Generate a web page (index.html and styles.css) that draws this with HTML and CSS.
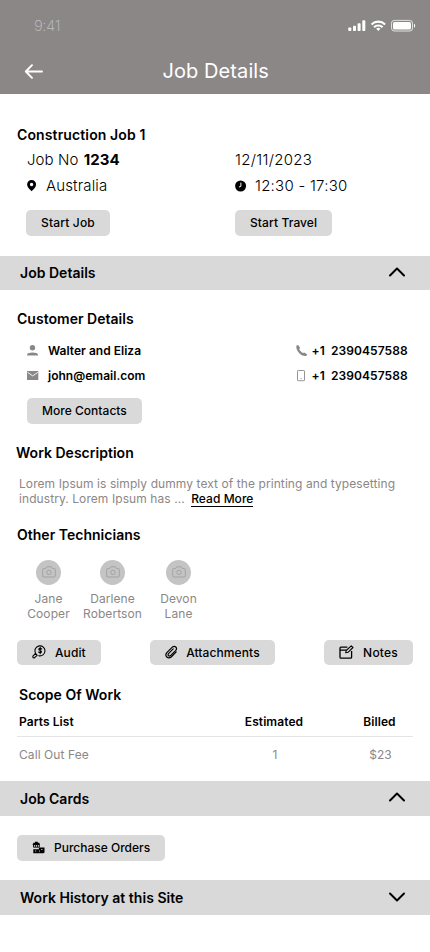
FILE: index.html
```html
<!DOCTYPE html>
<html lang="en">
<head>
<meta charset="utf-8">
<title>Job Details</title>
<link rel="stylesheet" href="styles.css">
</head>
<body>
<header class="top">
  <div class="status">
    <span class="clock">9:41</span>
    <svg class="signals" width="68" height="14" viewBox="0 0 68 14" fill="#fff">
      <rect x="0.3" y="8.5" width="3" height="3.6" rx=".8"/><rect x="5" y="6.7" width="3" height="5.4" rx=".8"/><rect x="9.6" y="4.2" width="3" height="7.9" rx=".8"/><rect x="14.3" y="1.2" width="3" height="10.9" rx=".8"/>
      <g fill="none" stroke="#fff" stroke-width="2.1"><path d="M23.5 5.4a9.8 9.8 0 0 1 13.6 0"/><path d="M26 8.2a6.2 6.2 0 0 1 8.6 0"/></g>
      <path d="M28.2 9.7a3.2 3.2 0 0 1 4.2 0l-2.1 2.3z"/>
      <rect x="43.5" y="1.4" width="21" height="10.6" rx="2.8" fill="none" stroke="#fff" stroke-opacity=".75"/><rect x="45" y="2.9" width="18" height="7.6" rx="1.5"/><path d="M66 4.8v4c1.6-.7 1.6-3.3 0-4z"/>
    </svg>
  </div>
  <div class="nav">
    <svg class="back" width="20" height="16" viewBox="0 0 20 16" fill="none" stroke="#fff" stroke-width="1.9" stroke-linecap="round" stroke-linejoin="round"><path d="M18 8.500H1.800M8 2.200 1.800 8.500 8 14.800"/></svg>
    <h1>Job Details</h1>
  </div>
</header>
<main>
  <section class="summary">
    <h2 class="jobname">Construction Job 1</h2>
    <div class="pair jobno"><span>Job No <b>1234</b></span><span class="date">12/11/2023</span></div>
    <div class="pair place">
      <span class="fact"><svg width="10" height="12" viewBox="0 0 10 12"><path fill-rule="evenodd" d="M4.600 0a4.500 4.500 0 0 1 4.500 4.500C9.100 7.400 6.400 9.400 4.600 11.200 2.800 9.400.1 7.400.1 4.500A4.500 4.500 0 0 1 4.600 0zM4.600 2.800a1.700 1.700 0 1 0 0 3.400 1.700 1.700 0 0 0 0-3.400z"/></svg>Australia</span>
      <span class="fact time"><svg width="12" height="12" viewBox="0 0 12 12"><circle cx="5.600" cy="6" r="5.500"/><path d="M5.900 2.600V6.300L4 7" fill="none" stroke="#fff"/></svg>12:30 - 17:30</span>
    </div>
    <div class="pair actions"><span><button>Start Job</button></span><span><button>Start Travel</button></span></div>
  </section>
  <div class="bar"><h2>Job Details</h2><svg class="chev" width="18" height="12" viewBox="0 0 18 12"><path d="m2 9.500 7-7 7 7"/></svg></div>
  <section class="details">
    <h2>Customer Details</h2>
    <div class="contact first">
      <svg width="12" height="12" viewBox="0 0 12 12" fill="#8b8787"><circle cx="5.500" cy="2.700" r="2.700"/><path d="M0 10.600V9.400C0 6.700 11 6.700 11 9.400v1.200z"/></svg><b>Walter and Eliza</b>
      <svg class="phone" width="12" height="12" viewBox="0 0 12 12" fill="#8b8787"><path d="M.400.800Q.9 0 2.200 0L4 2.700Q4 3.600 3.200 4.200C3.900 5.700 5.300 7 6.900 7.900L8.200 7.400 11.100 9.200Q11.100 10.400 10 11C5.200 11.900-.5 5.700.400.800z"/></svg><b class="num">+1&nbsp; 2390457588</b>
    </div>
    <div class="contact">
      <svg width="12" height="10" viewBox="0 0 12 10"><path d="M0 0h11.300v9H0z" fill="#8b8787"/><path d="m.5 1.300 5.200 3.600 5.200-3.600" fill="none" stroke="#fff" stroke-width=".9"/></svg><b>john@email.com</b>
      <svg class="phone" width="12" height="12" viewBox="0 0 12 12"><rect x="1.500" y=".5" width="7" height="10.200" rx=".7" fill="none" stroke="#8b8787" stroke-width=".9"/><path d="M4.500 8.500h1.200" stroke="#8b8787" stroke-width=".8"/></svg><b class="num">+1&nbsp; 2390457588</b>
    </div>
    <button class="more">More Contacts</button>
    <h2 class="work">Work Description</h2>
    <p class="desc">Lorem Ipsum is simply dummy text of the printing and typesetting<br>industry. Lorem Ipsum has ... <a>Read More</a></p>
    <h2 class="other">Other Technicians</h2>
    <div class="people">
      <div class="person"><span class="avatar"><svg width="14" height="12" viewBox="0 0 14 12"><path d="M.7 3.500Q.7 2.500 1.700 2.500H3.700L4.700.800H9.300L10.300 2.500H12.300Q13.300 2.500 13.300 3.500V10Q13.300 11 12.300 11H1.700Q.7 11 .7 10z"/><circle cx="7" cy="6.400" r="2.200"/></svg></span>Jane<br>Cooper</div>
      <div class="person"><span class="avatar"><svg width="14" height="12" viewBox="0 0 14 12"><path d="M.7 3.500Q.7 2.500 1.700 2.500H3.700L4.700.800H9.300L10.300 2.500H12.300Q13.300 2.500 13.300 3.500V10Q13.300 11 12.300 11H1.700Q.7 11 .7 10z"/><circle cx="7" cy="6.400" r="2.200"/></svg></span>Darlene<br>Robertson</div>
      <div class="person"><span class="avatar"><svg width="14" height="12" viewBox="0 0 14 12"><path d="M.7 3.500Q.7 2.500 1.700 2.500H3.700L4.700.800H9.300L10.300 2.500H12.300Q13.300 2.500 13.300 3.500V10Q13.300 11 12.300 11H1.700Q.7 11 .7 10z"/><circle cx="7" cy="6.400" r="2.200"/></svg></span>Devon<br>Lane</div>
    </div>
    <div class="tools">
      <button><svg width="14" height="14" viewBox="0 0 14 14" fill="none" stroke="#000" stroke-width="1.100" stroke-linecap="round"><path d="M3.300 7.600A5 5 0 1 1 6.800 10.700"/><path d="M3.500 8.300.900 11.100Q.5 12.600 2 13.100L5.200 10.300z" stroke-linejoin="round"/><path d="M9.700 4Q8 2.900 6.900 3.900C6.100 5.800 9.900 5 9.500 6.900 8.700 8.100 7.500 7.700 6.600 7M8.200 2.200V8.700"/></svg>Audit</button>
      <button class="attach"><svg width="14" height="14" viewBox="0 0 14 14" fill="none" stroke="#000" stroke-width="1.200" stroke-linecap="round" stroke-linejoin="round"><path d="M11.200 6.900 6.200 12C3 14.500-.8 10.900 1.800 7.700L7.300 2.100C9.800 0 12.800 3 10.800 5.300L5.500 10.600C4 11.700 2.300 10.100 3.500 8.600L8.200 3.900"/></svg>Attachments</button>
      <button class="notes"><svg width="15" height="14" viewBox="0 0 15 14" fill="none" stroke="#000" stroke-width="1.300" stroke-linejoin="round"><path d="M8.400 2.200H2Q1 2.200 1 3.200V12.200Q1 13.200 2 13.200H11.600Q12.600 13.200 12.600 12.200V6M1.200 5.200H7"/><path d="m6.700 7.800.5-2.300L12.200.900 14 2.500 9 7.300z" stroke-width="1.100"/></svg>Notes</button>
    </div>
    <h2 class="scope">Scope Of Work</h2>
    <div class="grid head"><span>Parts List</span><span>Estimated</span><span>Billed</span></div>
    <div class="grid"><span>Call Out Fee</span><span>1</span><span>$23</span></div>
  </section>
  <div class="bar"><h2>Job Cards</h2><svg class="chev" width="18" height="12" viewBox="0 0 18 12"><path d="m2 9.500 7-7 7 7"/></svg></div>
  <div class="orders"><button><svg width="13" height="13" viewBox="0 0 13 13"><path d="M1.500 1.800h1.500V.800h2.800v1h1.500L8 4H.5z"/><path d="M1.500 4v2.200h5.800V4M3.400 2.500v3.500M5.400 2.500v3.500" fill="none" stroke="#000" stroke-width=".9"/><path fill-rule="evenodd" d="M1.300 8.300h5.600V6.500h5.600v5l-1 .8H1.300zM3.200 9.600v1h1v-1zM9 8v.8h1.500V8zM7 9.300v2h.5v-2z"/></svg>Purchase Orders</button></div>
  <div class="bar last"><h2>Work History at this Site</h2><svg class="chev" width="18" height="12" viewBox="0 0 18 12"><path d="m2 2.500 7 7 7-7"/></svg></div>
</main>
</body>
</html>
```
FILE: styles.css
```css
* { box-sizing: border-box; }
body { margin: 0; width: 430px; height: 952px; overflow: hidden; background: #fff; color: #000; font-family: Inter, "Liberation Sans", sans-serif; font-size: 12px; line-height: 15px; letter-spacing: .08px; }
h1, h2 { margin: 0; }
svg { display: block; flex: none; }
.top { height: 93.500px; background: #8b8787; color: #fff; padding-top: 16px; }
.status { display: flex; justify-content: space-between; align-items: center; height: 20px; padding: 0 14px 0 34px; }
.clock { font-size: 15px; line-height: 18px; font-weight: 200; letter-spacing: -.4px; color: #c2c0c0; }
.nav { display: grid; grid-template-columns: 138.500px 1fr; align-items: center; height: 24px; margin-top: 23px; padding-left: 24px; }
h1 { font-size: 20px; line-height: 24px; font-weight: 400; letter-spacing: .08px; }
h2 { font-size: 14px; line-height: 20px; font-weight: 600; height: 20px; white-space: nowrap; letter-spacing: .02px; }
.summary { height: 162px; padding: 31px 17px 0; }
.jobname { letter-spacing: .12px; }
.pair { display: grid; grid-template-columns: 208px 1fr; padding-left: 10px; font-size: 15px; line-height: 20px; font-weight: 350; }
.jobno { margin-top: 5px; }
.jobno b { font-weight: 700; margin-left: 1px; }
.date { letter-spacing: .3px; }
.place { margin-top: 6px; }
.fact { display: flex; align-items: center; gap: 9px; letter-spacing: .15px; }
.fact.time { gap: 8px; letter-spacing: .25px; }
.actions { margin-top: 14.500px; }
.actions span:first-child { margin-left: -1px; }
button { display: inline-flex; align-items: center; gap: 9px; height: 25.500px; padding: 0 15px; border: 0; border-radius: 5px; background: #d9d9d9; font: 500 12px/15px Inter, "Liberation Sans", sans-serif; letter-spacing: .1px; color: #000; white-space: nowrap; }
.actions span:first-child button { letter-spacing: .17px; }
.bar { display: flex; align-items: center; justify-content: space-between; height: 34.500px; padding: 1px 24.500px 0 20px; background: #d9d9d9; }
.chev { fill: none; stroke: #000; stroke-width: 2; stroke-linecap: round; stroke-linejoin: round; margin-top: -3px; }
.details { height: 491px; padding: 19px 17px 0; }
.contact { display: grid; grid-template-columns: 21px 247.500px 16px 1fr; align-items: center; height: 25px; padding-left: 10px; }
.contact b { font-weight: 600; letter-spacing: .02px; }
.contact .num { letter-spacing: .08px; }
.contact.first { margin-top: 9px; }
.more { display: flex; margin: 10px 0 0 10px; letter-spacing: .03px; }
.work { margin-top: 19px; margin-left: -1px; }
.desc { margin: 13px 0 0 2px; color: #8b8787; white-space: nowrap; }
.desc a { margin-left: 3px; color: #000; font-weight: 500; border-bottom: 1px solid #000; letter-spacing: .04px; }
.other { margin-top: 19px; }
.people { display: grid; grid-template-columns: 63px 65px 67px; margin-top: 15px; text-align: center; color: #8b8787; }
.avatar { display: flex; align-items: center; justify-content: center; width: 25px; height: 25px; margin: 0 auto 6px; border-radius: 50%; background: #c4c4c4; }
.avatar svg { fill: none; stroke: #a5a3a3; }
.tools { display: flex; justify-content: space-between; margin-top: 19px; }
.attach { gap: 7px; }
.notes { letter-spacing: .22px; }
.scope { margin: 19.500px 0 0 2px; }
.grid { display: grid; grid-template-columns: 203px 106px 105px; height: 35px; padding: 10.500px 0 0 2px; text-align: center; color: #8b8787; }
.grid span:first-child { text-align: left; }
.head { height: 32px; padding-top: 9px; border-bottom: 1.500px solid #e5e5e5; color: #000; font-weight: 600; }
.head span:nth-child(n+2) { margin-left: -2px; }
.orders { height: 64.500px; padding: 19.500px 17px 0; }
.orders button { letter-spacing: 0; }
.last { padding-top: 2px; }
```
